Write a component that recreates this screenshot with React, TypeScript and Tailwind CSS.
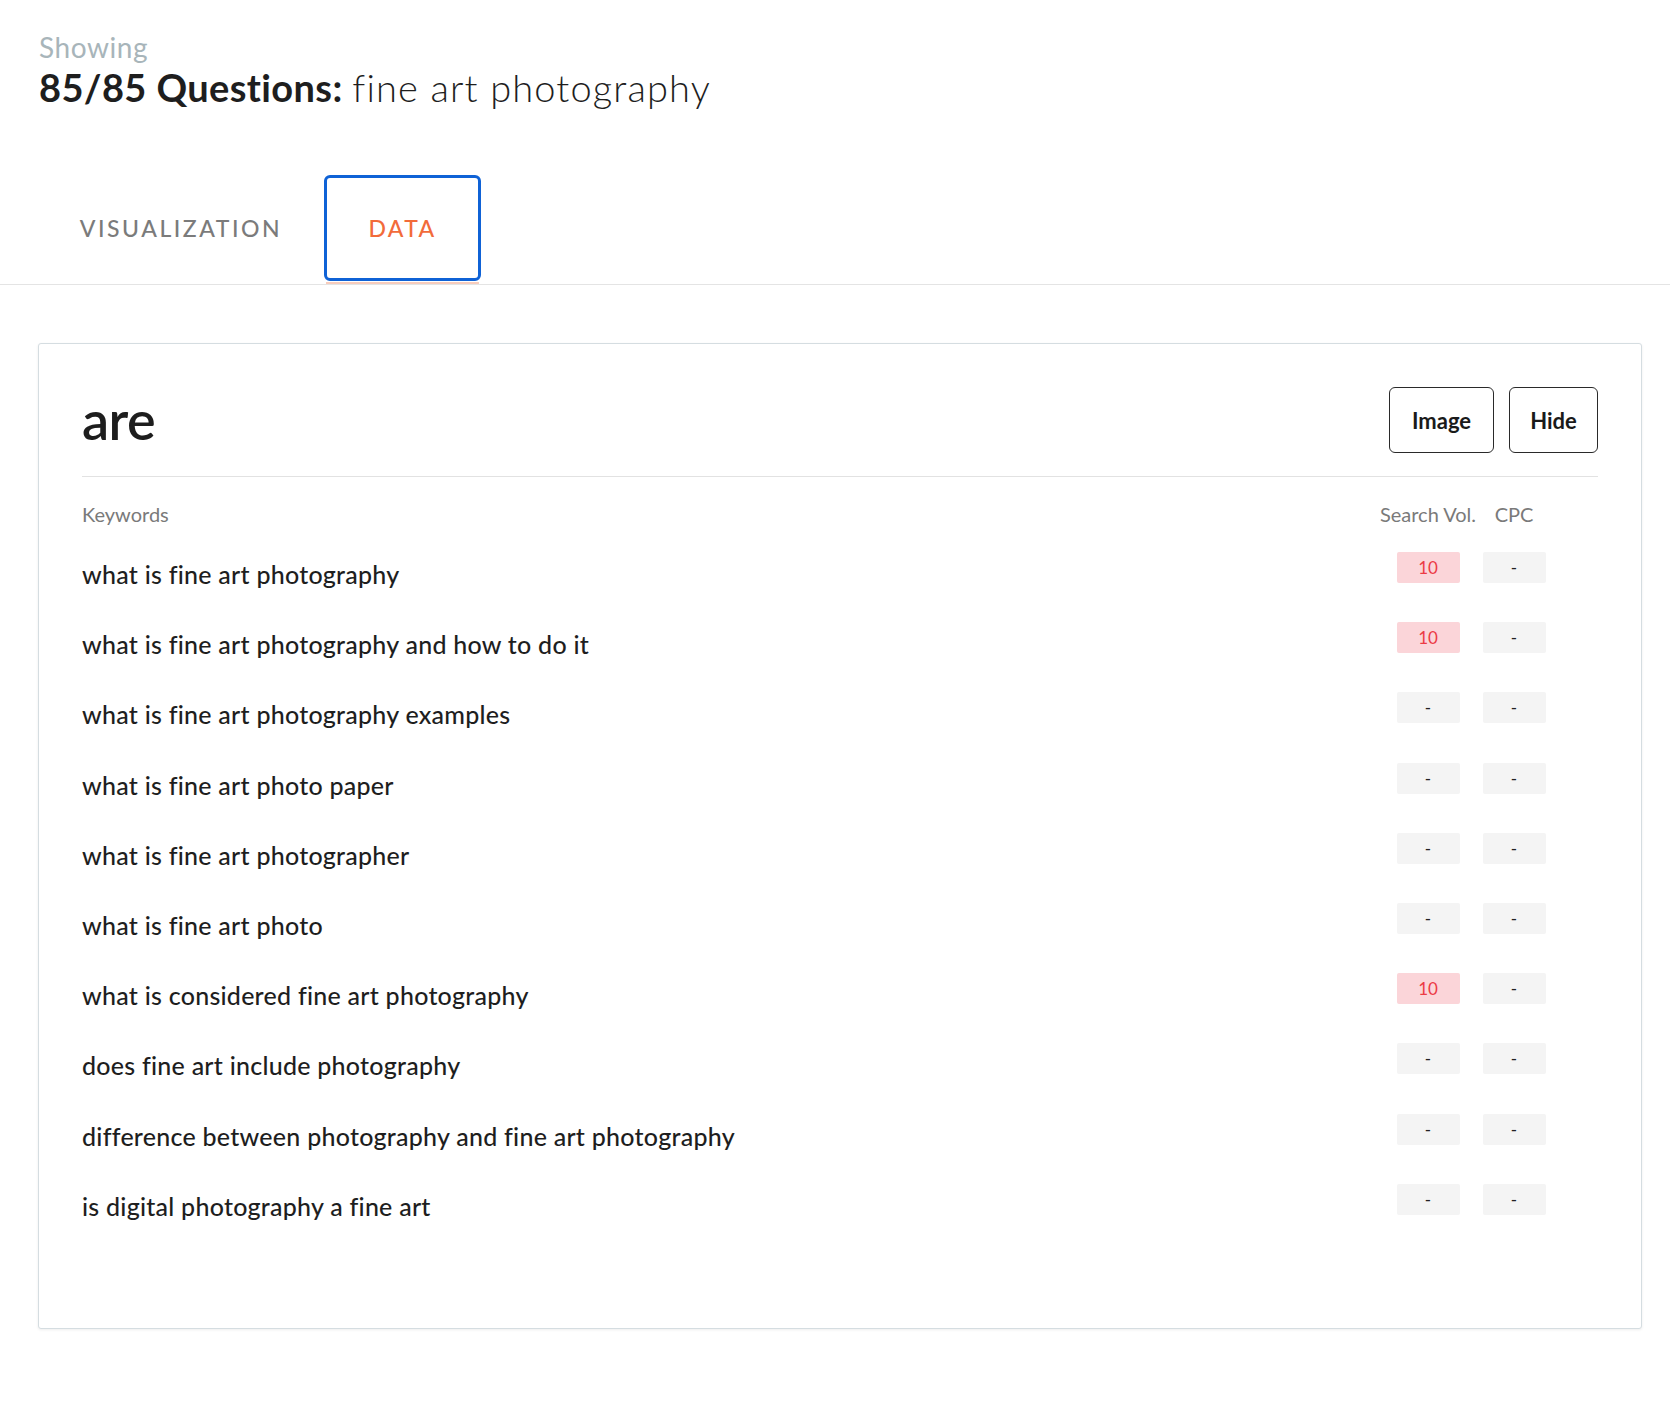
import { clsx } from 'clsx';

type Row = { keyword: string; vol: string; cpc: string };

const rows: Row[] = [
  { keyword: 'what is fine art photography', vol: '10', cpc: '-' },
  { keyword: 'what is fine art photography and how to do it', vol: '10', cpc: '-' },
  { keyword: 'what is fine art photography examples', vol: '-', cpc: '-' },
  { keyword: 'what is fine art photo paper', vol: '-', cpc: '-' },
  { keyword: 'what is fine art photographer', vol: '-', cpc: '-' },
  { keyword: 'what is fine art photo', vol: '-', cpc: '-' },
  { keyword: 'what is considered fine art photography', vol: '10', cpc: '-' },
  { keyword: 'does fine art include photography', vol: '-', cpc: '-' },
  { keyword: 'difference between photography and fine art photography', vol: '-', cpc: '-' },
  { keyword: 'is digital photography a fine art', vol: '-', cpc: '-' },
];

function Badge({ value }: { value: string }) {
  const hot = value !== '-';
  return (
    <div
      className={clsx(
        'w-[63px] h-[31px] rounded-[2px] flex items-center justify-center text-[17px] leading-none',
        hot ? 'bg-[#fbd5d9] text-[#ec3b45]' : 'bg-[#f4f4f4] text-[#222]'
      )}
    >
      {value}
    </div>
  );
}

export default function App() {
  return (
    <div className="min-h-[1402px] bg-white font-['Lato','Liberation_Sans',sans-serif] text-[#1e1e1e] [font-variant-ligatures:none]">
      <div className="pl-[39px] pt-[31px]">
        <div className="text-[28px] leading-[32px] tracking-[0.02em] text-[#a8b5ba]">Showing</div>
        <h1 className="mt-[2px] text-[38px] leading-[44px]">
          <span className="font-bold tracking-[0.01em]">85/85 Questions:</span>{' '}
          <span className="font-light tracking-[0.03em]">fine art photography</span>
        </h1>
      </div>

      <div className="mt-[66px] border-b border-[#e4e4e4]">
        <div className="ml-[38px] flex">
          <button className="w-[286px] h-[106px] flex items-center justify-center text-[23px] font-medium tracking-[0.11em] text-[#7b7b7b]">
            VISUALIZATION
          </button>
          <div className="flex flex-col">
            <button className="w-[157px] h-[106px] flex items-center justify-center rounded-[6px] border-[3px] border-[#0f62d6] text-[23px] font-medium tracking-[0.1em] text-[#f26b3a]">
              DATA
            </button>
            <div className="mx-[2px] mt-[1px] h-[2px] bg-[#f8cdbd]" />
          </div>
        </div>
      </div>

      <div className="mt-[58px] ml-[38px] w-[1604px] rounded-[3px] border border-[#d5dde1] bg-white px-[43px] pt-[43px] pb-[87px] shadow-[0_1px_3px_rgba(0,0,0,0.07)]">
        <div className="flex items-center justify-between border-b border-[#e2e2e2] pb-[23px]">
          <h2 className="text-[54px] leading-none font-semibold tracking-[-0.01em] text-[#1d1d1d]">are</h2>
          <div className="flex gap-[15px]">
            <button className="w-[105px] h-[66px] rounded-[6px] border-[1.5px] border-[#2a2a2a] text-[22px] font-bold text-[#1a1a1a]">
              Image
            </button>
            <button className="w-[89px] h-[66px] rounded-[6px] border-[1.5px] border-[#2a2a2a] text-[22px] font-bold text-[#1a1a1a]">
              Hide
            </button>
          </div>
        </div>

        <div className="grid grid-cols-[1fr_100px_72px_48px] h-[62px] pt-[25px] text-[20px] leading-[24px] text-[#7a7a7a]">
          <div>Keywords</div>
          <div className="text-center">Search Vol.</div>
          <div className="text-center">CPC</div>
          <div />
        </div>

        {rows.map((r) => (
          <div key={r.keyword} className="grid grid-cols-[1fr_100px_72px_48px] h-[70.2px]">
            <div className="self-center text-[25px] font-medium leading-[30px] tracking-[0.01em]">{r.keyword}</div>
            <div className="flex justify-center pt-[13px]">
              <Badge value={r.vol} />
            </div>
            <div className="flex justify-center pt-[13px]">
              <Badge value={r.cpc} />
            </div>
            <div />
          </div>
        ))}
      </div>
    </div>
  );
}
